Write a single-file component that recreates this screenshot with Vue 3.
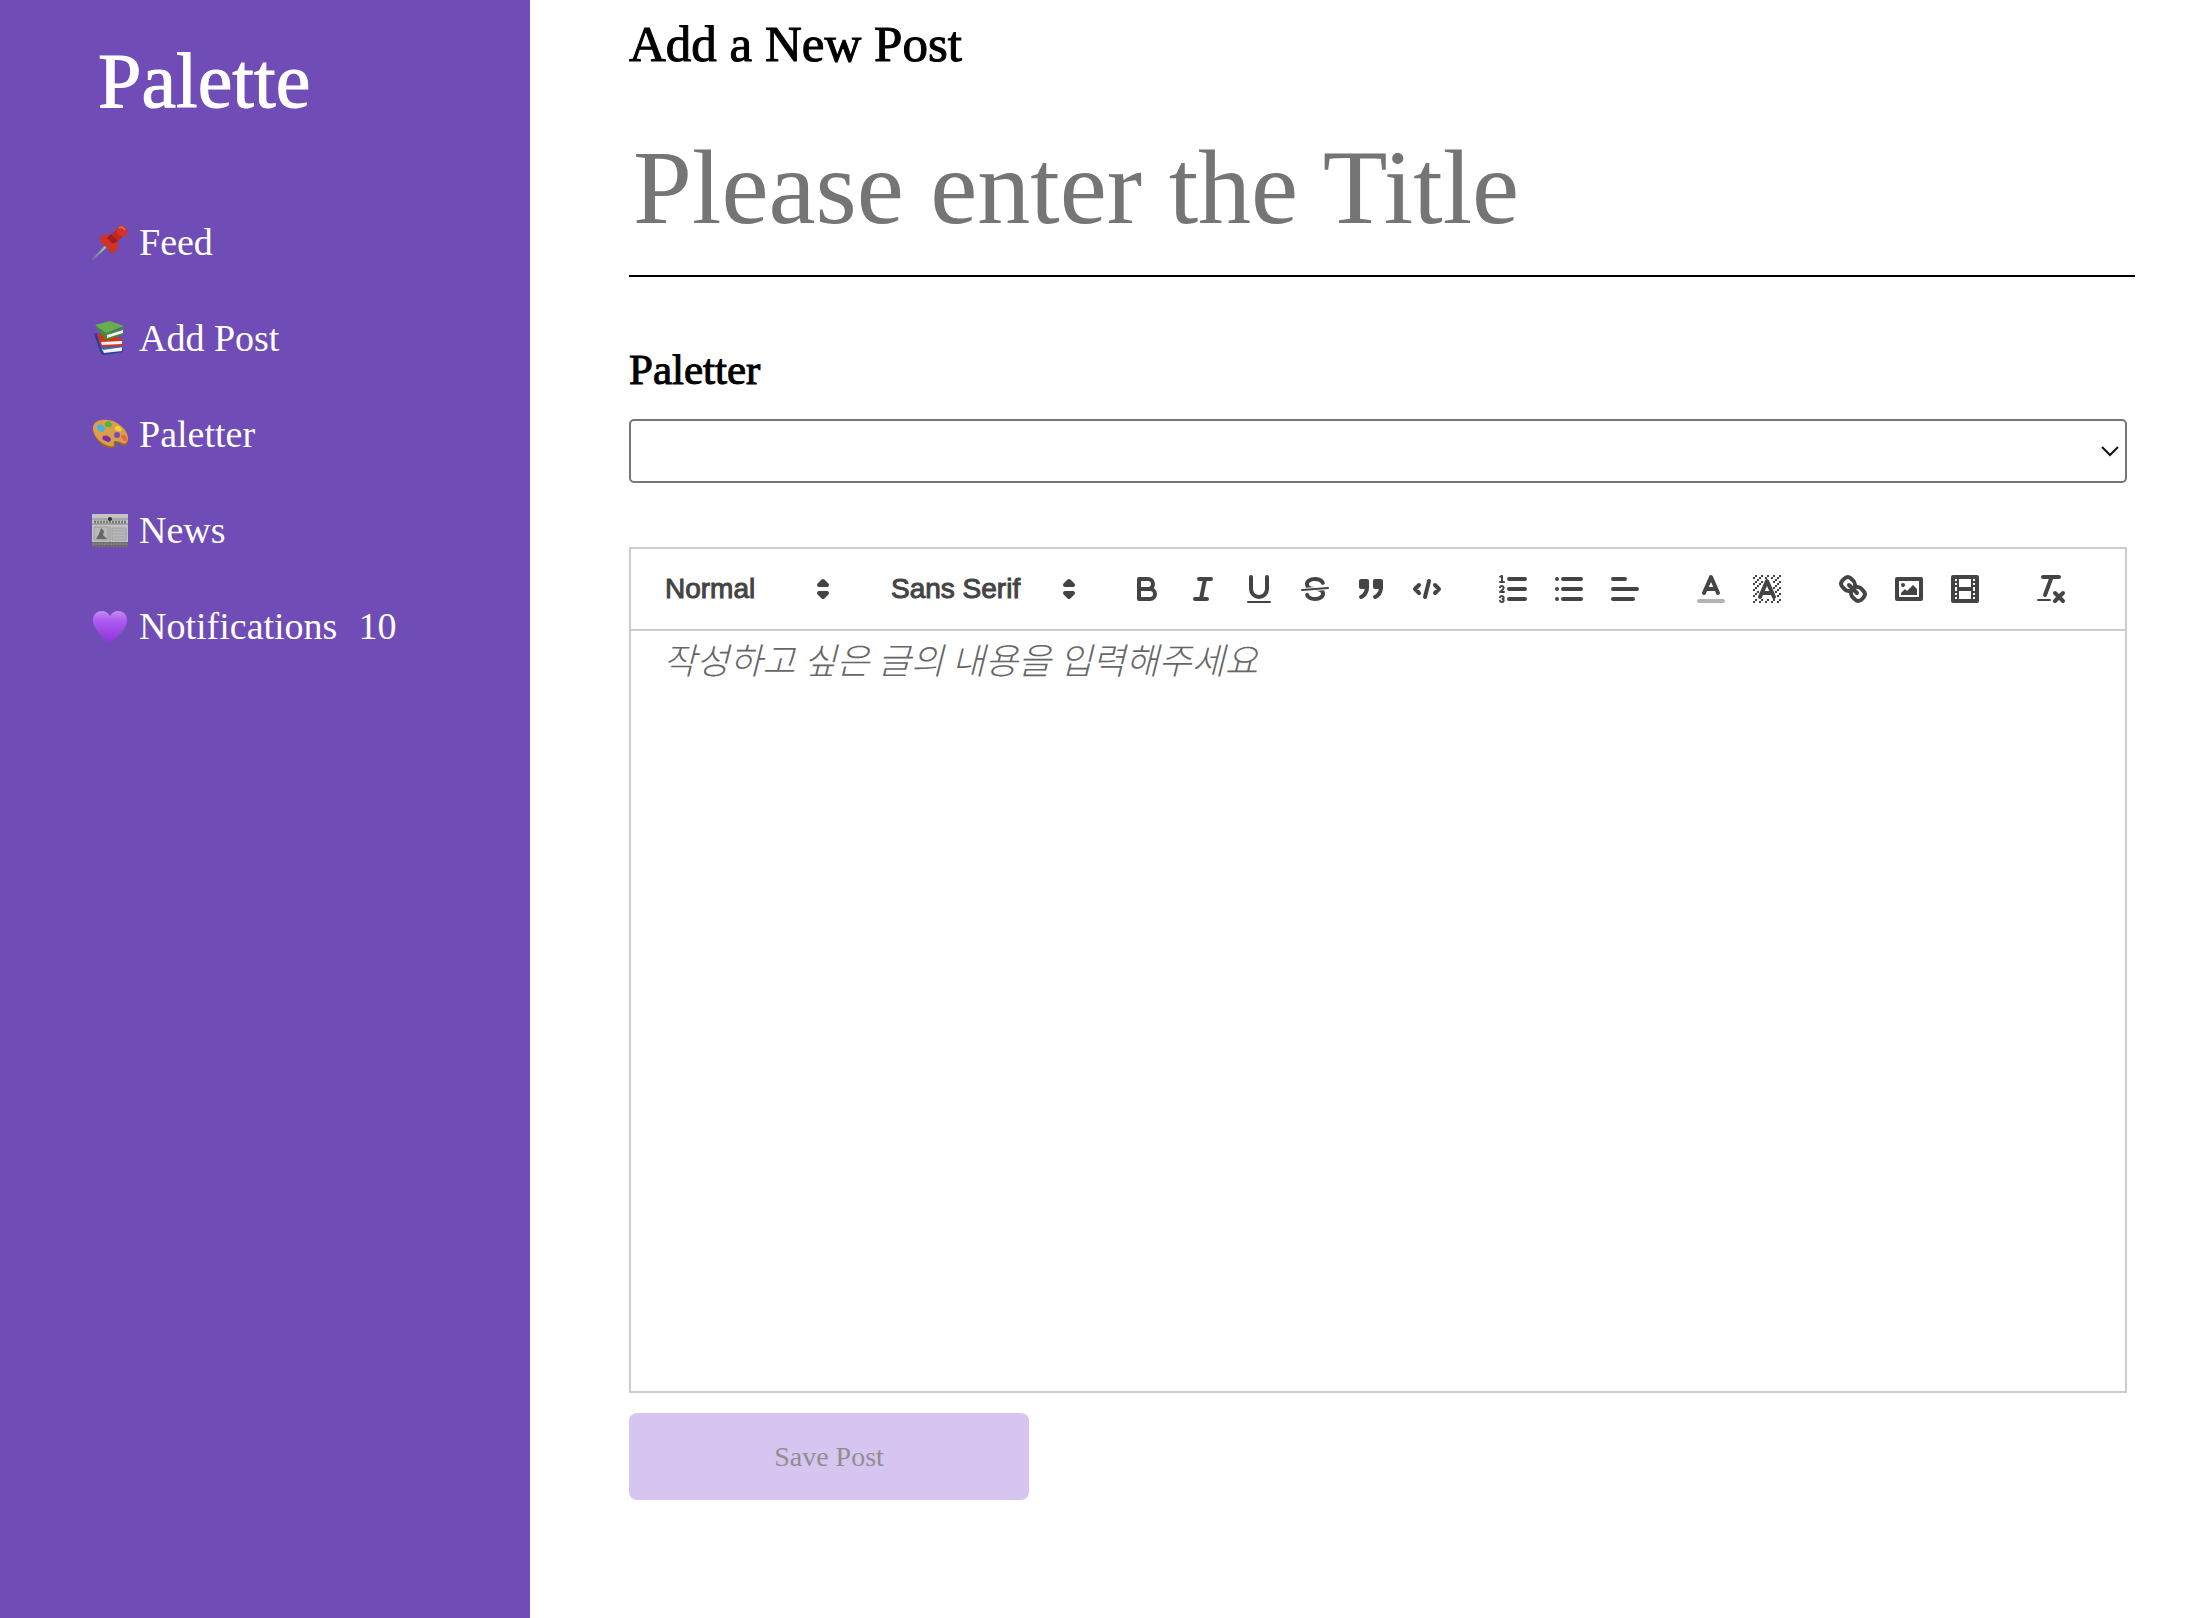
<script setup>
import { ref } from 'vue'

const title = ref('')
const paletter = ref('')
const body = ref('')

const nav = [
  { icon: 'pin', label: 'Feed' },
  { icon: 'books', label: 'Add Post' },
  { icon: 'palette', label: 'Paletter' },
  { icon: 'news', label: 'News' },
  { icon: 'heart', label: 'Notifications', count: 10 },
]

const s = (d) => `<path class="st" d="${d}"/>`
const f = (d) => `<path class="fl" d="${d}"/>`
const thin = (d) => `<path class="st thin" d="${d}"/>`

// Diagonal hatch of the highlight icon, one unit per cell, open behind the letter
const hatch = () => {
  let d = ''
  for (let y = 2; y < 16; y++) {
    for (let x = 2; x < 16; x++) {
      const half = 2 + (y - 4) * 0.35
      const behind = y > 3 && y < 14 && Math.abs(x + 0.5 - 9) < half
      if ((x + y) % 3 === 2 && !behind) d += `M${x},${y}h1v1h-1Z`
    }
  }
  return d
}

const icons = {
  bold: s('M5,4H9.5A2.5,2.5,0,0,1,9.5,9H5Z') + s('M5,9h5.5A2.5,2.5,0,0,1,10.5,14H5Z'),
  italic: s('M7,4H13M5,14H11M8,14L10,4'),
  underline: s('M5,3V9a4,4,0,0,0,8,0V3') + '<rect class="fl" height="1" rx="0.5" width="12" x="3" y="15"/>',
  strike:
    thin('M15.5,8.5L2.5,9.5') +
    f('M9.007,8C6.542,7.791,6,7.519,6,6.5,6,5.792,7.283,5,9,5c1.571,0,2.765.679,2.969,1.309a1,1,0,0,0,1.9-.617C13.356,4.106,11.354,3,9,3,6.2,3,4,4.538,4,6.5a3.2,3.2,0,0,0,.5,1.843Z') +
    f('M8.984,10C11.457,10.208,12,10.479,12,11.5c0,.708-1.283,1.5-3,1.5-1.571,0-2.765-.679-2.969-1.309a1,1,0,1,0-1.9.617C4.644,13.894,6.646,15,9,15c2.8,0,5-1.538,5-3.5a3.2,3.2,0,0,0-.5-1.843Z'),
  quote:
    '<rect class="fl st2" height="3" width="3" x="4" y="5"/><rect class="fl st2" height="3" width="3" x="11" y="5"/>' +
    '<path class="fl st2" d="M7,8c0,4.031-3,5-3,5"/><path class="fl st2" d="M14,8c0,4.031-3,5-3,5"/>',
  code: s('M5,7L3,9L5,11M13,7L15,9L13,11M10,5L8,13'),
  ordered:
    s('M7,4H15M7,9H15M7,14H15') +
    thin('M2.5,5.5H4.5') +
    f('M3.5,6A.5.5,0,0,1,3,5.5V3.085l-.276.138A.5.5,0,0,1,2.053,3c-.124-.247-.023-.324.224-.447l1-.5A.5.5,0,0,1,4,2.5v3A.5.5,0,0,1,3.5,6Z') +
    thin('M4.5,10.5h-2c0-.234,1.85-1.076,1.85-2.234A.959.959,0,0,0,2.5,8.156') +
    thin('M2.5,14.846a.959.959,0,0,0,1.85-.11A.7.7,0,0,0,3.75,14a.7.7,0,0,0,.6-.736.959.959,0,0,0-1.85-.109'),
  bullet: s('M6,4H15M6,9H15M6,14H15M3,4V4M3,9V9M3,14V14'),
  align: s('M3,9H15M3,14H13M3,4H9'),
  color: '<path class="st faint" d="M3,15H15"/>' + s('M5.5,11L9,3L12.5,11M11.63,9H6.38'),
  background: f(hatch()) + s('M5.5,13L9,5L12.5,13M11.63,11H6.38'),
  link:
    s('M7,7L11,11') +
    s('M8.9,4.577a3.476,3.476,0,0,1,.36,4.679A3.476,3.476,0,0,1,4.577,8.9C3.185,7.5,2.035,6.4,4.217,4.217S7.5,3.185,8.9,4.577Z') +
    s('M13.423,9.1a3.476,3.476,0,0,0-4.679-.36,3.476,3.476,0,0,0,.36,4.679c1.392,1.392,2.5,2.542,4.679.36S14.815,10.5,13.423,9.1Z'),
  image: s('M3,4H15V14H3Z') + '<circle class="fl" cx="6" cy="7" r="1"/>' + f('M5,12V11L7,9L8,10L11,7L13,9V12Z'),
  video: s('M3,3H15V15H3Z') + f('M5,3h1v12h-1ZM12,3h1v12h-1ZM5,8h8v2h-8ZM3,5h3v1h-3ZM3,7h3v1h-3ZM3,10h3v1h-3ZM3,12h3v1h-3ZM12,5h3v1h-3ZM12,7h3v1h-3ZM12,10h3v1h-3ZM12,12h3v1h-3Z'),
  clean: s('M5,3H13M6,12L9.35,3M11,11L15,15M15,11L11,15') + '<rect class="fl" height="1" rx="0.5" width="7" x="2" y="14"/>',
}

const groups = [
  [['bold', 'Bold'], ['italic', 'Italic'], ['underline', 'Underline'], ['strike', 'Strike'], ['quote', 'Blockquote'], ['code', 'Code block']],
  [['ordered', 'Ordered list'], ['bullet', 'Bullet list'], ['align', 'Align']],
  [['color', 'Text color'], ['background', 'Background color']],
  [['link', 'Link'], ['image', 'Image'], ['video', 'Video']],
  [['clean', 'Clear formatting']],
]
</script>

<template>
  <div class="page">
    <aside class="sidebar">
      <h1 class="logo">Palette</h1>
      <nav class="nav">
        <a v-for="item in nav" :key="item.label" href="#" class="nav-link">
          <svg v-if="item.icon === 'pin'" class="emoji" viewBox="0 0 36 36" aria-hidden="true">
            <path d="M0,36L14,20L17,22Z" fill="#9fb4c6" stroke="#6f7f96" stroke-width="1" />
            <path d="M19,11L26,4L32,11L25,18Z" fill="#c5281f" />
            <path d="M8,13C12,10 17,9 20,12L25,17C28,21 26,27 22,29C20,30 18,28 14,23C9,20 7,16 8,13Z" fill="#cc3529" />
            <path d="M19,10L26,17L21,20L15,14Z" fill="#a61c1c" />
            <ellipse cx="30" cy="7" rx="6" ry="5" transform="rotate(45 30 7)" fill="#d23327" />
            <path d="M27,4C29,2 32,4 33,6" fill="none" stroke="#e5604e" stroke-width="2" />
          </svg>
          <svg v-else-if="item.icon === 'books'" class="emoji" viewBox="0 0 36 36" aria-hidden="true">
            <path d="M2,14L5,13L10,31L31,29V32L12,35Q9,34 8,31Z" fill="#27418f" />
            <path d="M10,29L30,27V31L12,33Z" fill="#f1f3f6" />
            <path d="M10,26L31,23V27L11,30Z" fill="#3c65b5" />
            <path d="M6,13L29,18V21H31V26L10,27Q6,21 6,13Z" fill="#d3321f" />
            <path d="M9,22L30,21V24L10,25Z" fill="#f4f4f2" />
            <path d="M3,6L14,13L32,7V9L15,15V18L31,13V15L14,20Z" fill="#3b8e37" />
            <path d="M3,5L18,1L32,6L14,13Z" fill="#67ae4f" />
            <path d="M15,15L31,10V13L15,18Z" fill="#f3f3ef" />
          </svg>
          <svg v-else-if="item.icon === 'palette'" class="emoji" viewBox="0 0 36 36" aria-hidden="true">
            <path d="M1,14C0,6 8,4 16,5C26,6 36,15 36,24C36,30 32,31 28,28C25,26 21,26 23,29C25,33 18,33 14,31C7,28 2,21 1,14Z" fill="#9c6526" />
            <path d="M1,12C1,5 9,3 16,4C26,5 36,14 36,22C36,28 32,29 28,26C24,24 20,25 22,28C23,31 18,31 14,29C7,26 1,19 1,12Z" fill="#d99d4b" />
            <circle cx="25" cy="19" r="3" fill="#704cb6" />
            <path d="M5,10Q9,6 12,11Q14,15 10,16Q5,15 5,10Z" fill="#42b4e6" />
            <path d="M13,7Q17,3 20,8Q20,12 16,11Q12,11 13,7Z" fill="#4cb83d" />
            <path d="M23,11Q26,8 29,12Q31,16 26,15Q22,14 23,11Z" fill="#f4cf38" />
            <path d="M29,20Q33,17 35,23Q34,27 31,24Z" fill="#f0604d" />
            <path d="M11,20Q16,18 19,23Q18,28 14,25Q9,24 11,20Z" fill="#7a2cab" />
          </svg>
          <svg v-else-if="item.icon === 'news'" class="emoji" viewBox="0 0 36 36" aria-hidden="true">
            <rect y="2" width="36" height="33" fill="#c3c3c3" />
            <rect y="30" width="36" height="5" fill="#6c6c6c" />
            <path d="M0,7H36M0,12H36" stroke="#858585" stroke-width="1" />
            <path d="M2,10H34" stroke="#7a7a7a" stroke-width="3" stroke-dasharray="2 1" />
            <circle cx="18" cy="7" r="2" fill="#303030" />
            <path d="M2,15H16V28H2ZM20,16H34V28H20Z" fill="#b8b8b8" stroke="#9c9c9c" />
            <path d="M4,27L7,22L9,16L12,19L11,23L15,27Z" fill="#666" />
            <path d="M21,19H33M21,22H33M21,25H33" stroke="#a2a2a2" />
            <path d="M18,14V30" stroke="#959595" />
            <path d="M0,32H36" stroke="#989898" stroke-dasharray="2 1" />
          </svg>
          <svg v-else class="emoji" viewBox="0 0 36 36" aria-hidden="true">
            <defs>
              <linearGradient id="heart" x1="0" y1="0" x2="0" y2="1">
                <stop offset="0" stop-color="#c788f5" />
                <stop offset="0.3" stop-color="#ac5af0" />
                <stop offset="1" stop-color="#8d32dc" />
              </linearGradient>
            </defs>
            <path d="M18,36C15,31 1,23 1,12C1,2 14,0 18,8C22,0 35,2 35,12C35,23 21,31 18,36Z" fill="url(#heart)" />
          </svg>
          <span>{{ item.label }}</span>
          <span v-if="item.count" class="count">{{ item.count }}</span>
        </a>
      </nav>
    </aside>

    <main class="main">
      <h2 class="heading">Add a New Post</h2>
      <input v-model="title" class="title" type="text" placeholder="Please enter the Title" aria-label="Title" />

      <label class="label" for="paletter">Paletter</label>
      <div class="select-wrap">
        <select id="paletter" v-model="paletter" class="select">
          <option value=""></option>
        </select>
        <svg class="chevron" viewBox="0 0 18 12" aria-hidden="true">
          <path d="M1,2L9,10L17,2" fill="none" stroke="#111" stroke-width="2" />
        </svg>
      </div>

      <section class="editor">
        <div class="toolbar">
          <button type="button" class="picker picker-size">
            Normal
            <svg class="icon" viewBox="0 0 18 18" aria-hidden="true"><path class="st" d="M7,11L9,13L11,11ZM7,7L9,5L11,7Z" /></svg>
          </button>
          <button type="button" class="picker picker-font">
            Sans Serif
            <svg class="icon" viewBox="0 0 18 18" aria-hidden="true"><path class="st" d="M7,11L9,13L11,11ZM7,7L9,5L11,7Z" /></svg>
          </button>
          <div v-for="(group, i) in groups" :key="i" class="group">
            <button v-for="[name, label] in group" :key="name" type="button" class="tool" :aria-label="label">
              <svg class="icon" viewBox="0 0 18 18" aria-hidden="true" v-html="icons[name]"></svg>
            </button>
          </div>
        </div>
        <textarea v-model="body" class="body" placeholder="작성하고 싶은 글의 내용을 입력해주세요" aria-label="Post body"></textarea>
      </section>

      <button type="button" class="save" disabled>Save Post</button>
    </main>
  </div>
</template>

<style>
body {
  margin: 0;
  background: #fff;
}
</style>

<style scoped>
* {
  box-sizing: border-box;
}
.page {
  display: flex;
  min-height: 100vh;
  font-family: "Liberation Serif", "Noto Sans CJK KR", serif;
  color: #000;
}
.sidebar {
  flex: 0 0 530px;
  padding: 36px 24px 36px 92px;
  background: #704cb6;
  color: #fff;
}
.logo {
  margin: 0 0 92px;
  padding-left: 6px;
  font-size: 78px;
  font-weight: 400;
  line-height: 90px;
  -webkit-text-stroke: 1px currentColor;
}
.nav {
  display: flex;
  flex-direction: column;
  gap: 48px;
}
.nav-link {
  display: flex;
  align-items: center;
  gap: 11px;
  color: #fff;
  font-size: 38px;
  line-height: 48px;
  text-decoration: none;
}
.emoji {
  width: 36px;
  height: 36px;
}
.count {
  padding-left: 10px;
}
.main {
  flex: 1;
  min-width: 0;
  display: flex;
  flex-direction: column;
  padding: 12px 61px 80px 99px;
}
.heading {
  margin: 0 0 25px;
  font-size: 51px;
  font-weight: 400;
  line-height: 64px;
  -webkit-text-stroke: 1px currentColor;
}
.title {
  width: 100%;
  height: 176px;
  padding: 0 4px;
  border: 0;
  border-bottom: 2px solid #000;
  background: transparent;
  font: inherit;
  font-size: 106px;
  outline: none;
}
.title::placeholder {
  color: #757575;
}
.label {
  margin: 67px 0 23px;
  font-size: 43px;
  line-height: 52px;
  -webkit-text-stroke: 1px currentColor;
}
.select-wrap {
  position: relative;
  margin-right: 8px;
}
.select {
  display: block;
  width: 100%;
  height: 64px;
  border: 2px solid #767676;
  border-radius: 5px;
  background: #fff;
  appearance: none;
  font: inherit;
  font-size: 28px;
}
.chevron {
  position: absolute;
  right: 8px;
  top: 26px;
  width: 18px;
  height: 12px;
  pointer-events: none;
}
.editor {
  margin: 64px 8px 20px 0;
  border: 2px solid #ccc;
}
.toolbar {
  display: flex;
  flex-wrap: wrap;
  gap: 0 30px;
  padding: 16px;
  border-bottom: 2px solid #ccc;
}
.group {
  display: flex;
}
.picker {
  display: flex;
  align-items: center;
  justify-content: space-between;
  height: 48px;
  padding: 0 2px 0 18px;
  border: 0;
  background: none;
  color: #444;
  font: 500 28px "Liberation Sans", Arial, sans-serif;
  -webkit-text-stroke: 1px currentColor;
}
.picker-size {
  width: 196px;
}
.picker-font {
  width: 216px;
}
.tool {
  display: flex;
  align-items: center;
  justify-content: center;
  width: 56px;
  height: 48px;
  padding: 0;
  border: 0;
  background: none;
}
.icon {
  width: 36px;
  height: 36px;
}
.icon :deep(.st) {
  fill: none;
  stroke: #444;
  stroke-width: 2;
  stroke-linecap: round;
  stroke-linejoin: round;
}
.icon :deep(.thin) {
  stroke-width: 1;
}
.icon :deep(.faint) {
  opacity: 0.4;
}
.icon :deep(.fl) {
  fill: #444;
}
.icon :deep(.st2) {
  stroke: #444;
  stroke-width: 2;
  stroke-linecap: round;
  stroke-linejoin: round;
}
.body {
  display: block;
  width: 100%;
  height: 760px;
  padding: 2px 32px;
  border: 0;
  background: transparent;
  resize: none;
  outline: none;
  font-family: "Noto Sans CJK KR", sans-serif;
  font-size: 36px;
  font-weight: 300;
  line-height: 51px;
}
.body::placeholder {
  color: #666;
  font-style: italic;
}
.save {
  width: 400px;
  height: 87px;
  border: 0;
  border-radius: 8px;
  background: #d6c5f0;
  color: #8f8f8f;
  font: inherit;
  font-size: 28px;
}
</style>
